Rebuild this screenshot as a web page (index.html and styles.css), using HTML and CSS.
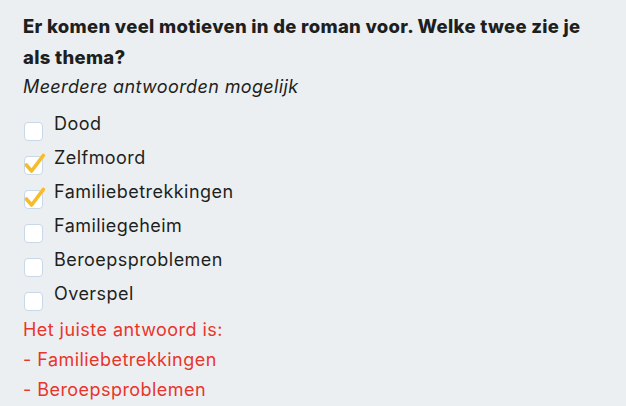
FILE: index.html
```html
<!DOCTYPE html>
<html lang="nl">
<head>
<meta charset="utf-8">
<link rel="stylesheet" href="styles.css">
</head>
<body>
<div class="question">
  <h1 class="title">Er komen veel motieven in de roman voor. Welke twee zie je als thema?</h1>
  <p class="hint">Meerdere antwoorden mogelijk</p>
  <ul class="options">
    <li class="option"><span class="box"></span><span class="label">Dood</span></li>
    <li class="option"><span class="box"><svg class="check" viewBox="0 0 19 19"><path d="M2.4 9 L7.6 15 L19.4 -0.6" fill="none" stroke="#f7bc2c" stroke-width="3.6" stroke-linecap="round" stroke-linejoin="round"/></svg></span><span class="label">Zelfmoord</span></li>
    <li class="option"><span class="box"><svg class="check" viewBox="0 0 19 19"><path d="M2.4 9 L7.6 15 L19.4 -0.6" fill="none" stroke="#f7bc2c" stroke-width="3.6" stroke-linecap="round" stroke-linejoin="round"/></svg></span><span class="label">Familiebetrekkingen</span></li>
    <li class="option"><span class="box"></span><span class="label">Familiegeheim</span></li>
    <li class="option"><span class="box"></span><span class="label">Beroepsproblemen</span></li>
    <li class="option"><span class="box"></span><span class="label">Overspel</span></li>
  </ul>
  <div class="answer">
    <p>Het juiste antwoord is:</p>
    <p>- Familiebetrekkingen</p>
    <p>- Beroepsproblemen</p>
  </div>
</div>
</body>
</html>
```
FILE: styles.css
```css
html, body {
  margin: 0;
  padding: 0;
  background: #eceff2;
}
body {
  font-family: Inter, "Noto Sans", sans-serif;
  color: #1e1f20;
}
.question {
  padding: 11px 20px 0 23px;
}
.title {
  margin: 0;
  font-size: 18.5px;
  font-weight: 800;
  line-height: 31px;
  letter-spacing: 0.3px;
}
.hint {
  margin: 0;
  font-style: italic;
  font-size: 18px;
  line-height: 28px;
  letter-spacing: 0.37px;
}
.options {
  list-style: none;
  margin: 6px 0 0 0;
  padding: 0;
}
.option {
  display: flex;
  align-items: flex-start;
  height: 34px;
}
.box {
  position: relative;
  box-sizing: border-box;
  flex: none;
  width: 19px;
  height: 19px;
  margin-top: 14.5px;
  margin-left: 1px;
  border: 1px solid #c9d8e6;
  border-radius: 4px;
  background: #fff;
}
.check {
  position: absolute;
  left: -1px;
  top: -1px;
  width: 19px;
  height: 19px;
  overflow: visible;
}
.label {
  margin-left: 11px;
  font-size: 18px;
  line-height: 34px;
  letter-spacing: 0.45px;
}
.answer {
  margin-top: 4px;
  color: #e8352b;
  font-size: 18px;
  letter-spacing: 0.45px;
}
.answer p {
  margin: 0;
  line-height: 30px;
}
```
